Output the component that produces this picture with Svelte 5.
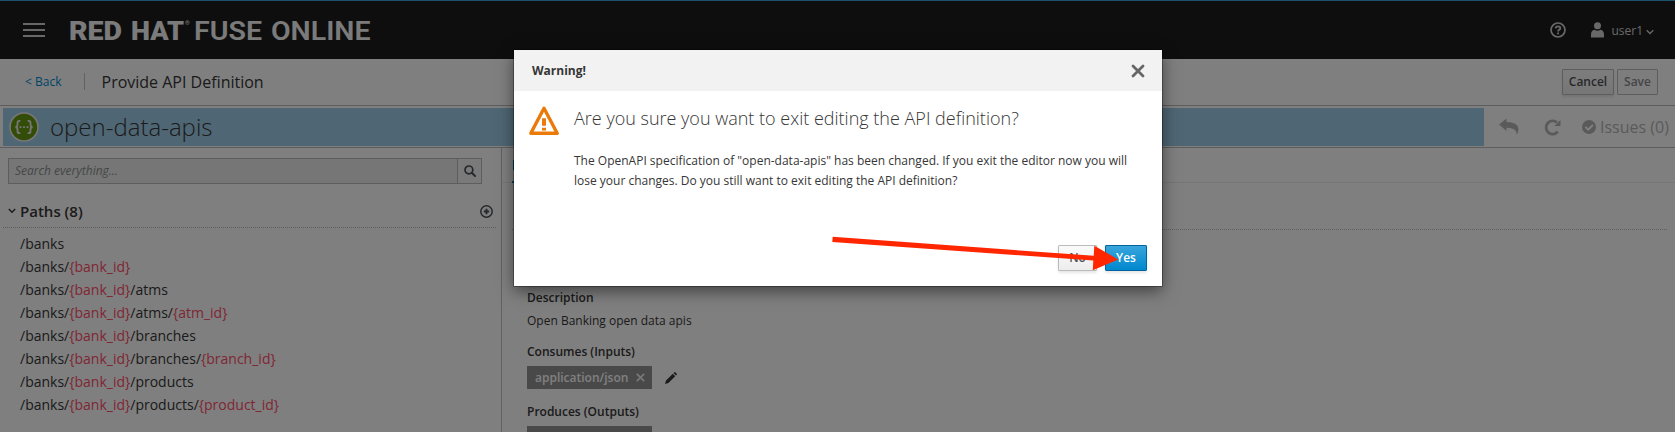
<script>
  const paths = [
    '/banks',
    '/banks/{bank_id}',
    '/banks/{bank_id}/atms',
    '/banks/{bank_id}/atms/{atm_id}',
    '/banks/{bank_id}/branches',
    '/banks/{bank_id}/branches/{branch_id}',
    '/banks/{bank_id}/products',
    '/banks/{bank_id}/products/{product_id}'
  ].map((p) => p.split(/(\{[^}]+\})/).filter(Boolean));
</script>

<div class="app">
  <header class="top">
    <div class="burger"><i></i><i></i><i></i></div>
    <svg class="brand" width="304" height="30" viewBox="0 0 304 30">
      <text class="heavy" x="-1" y="24.5" textLength="53" lengthAdjust="spacingAndGlyphs">RED</text>
      <text class="heavy" x="61" y="24.5" textLength="53" lengthAdjust="spacingAndGlyphs">HAT</text>
      <text class="reg" x="115" y="10">®</text>
      <text class="mid" x="124" y="24.5" textLength="68" lengthAdjust="spacingAndGlyphs">FUSE</text>
      <text class="mid" x="201" y="24.5" textLength="99.5" lengthAdjust="spacingAndGlyphs">ONLINE</text>
    </svg>
    <svg class="help" width="16" height="16" viewBox="0 0 16 16">
      <circle cx="8" cy="8" r="7" fill="none" stroke="#d1d1d1" stroke-width="1.7" />
      <path d="M5.7 6.3Q5.9 4.4 8 4.4Q10.3 4.4 10.3 6.2Q10.3 7.2 9 7.9Q8.1 8.4 8.1 9.4" fill="none" stroke="#d1d1d1" stroke-width="1.8" />
      <path d="M7.1 10.4h1.9v1.8H7.1z" fill="#d1d1d1" />
    </svg>
    <svg class="person" width="13" height="16" viewBox="0 0 13 16" fill="#d1d1d1">
      <circle cx="6.5" cy="3.7" r="3.5" />
      <path d="M0 15.5V12.5Q0 8.5 3.6 7.8Q6.5 9.5 9.4 7.8Q13 8.5 13 12.5V15.5Z" />
    </svg>
    <span class="user">user1</span>
    <svg class="chev" width="8" height="6" viewBox="0 0 8 6"><path d="M.7 1.2L4 4.5L7.3 1.2" fill="none" stroke="#d1d1d1" stroke-width="1.3" /></svg>
  </header>

  <div class="sub">
    <span class="back">&lt; Back</span>
    <span class="crumb">Provide API Definition</span>
    <button class="btn">Cancel</button>
    <button class="btn off">Save</button>
  </div>

  <div class="titlebar">
    <div class="title">
      <svg class="swagger" width="30" height="30" viewBox="0 0 30 30">
        <circle cx="15" cy="15" r="14.8" fill="#eee" />
        <circle cx="15" cy="15" r="13.2" fill="#669a12" />
        <path d="M11.4 8.8H10.3Q8.5 8.8 8.5 10.8V12.7Q8.5 14.8 6.5 15Q8.5 15.2 8.5 17.3V19.2Q8.5 21.2 10.3 21.2H11.4M18.6 8.8H19.7Q21.5 8.8 21.5 10.8V12.7Q21.5 14.8 23.5 15Q21.5 15.2 21.5 17.3V19.2Q21.5 21.2 19.7 21.2H18.6" fill="none" stroke="#eee" stroke-width="1.8" />
        <path d="M10.6 14.2h1.8v1.8h-1.8zM14.1 14.2h1.8v1.8h-1.8zM17.6 14.2h1.8v1.8h-1.8z" fill="#eee" />
      </svg>
      <h1>open-data-apis</h1>
    </div>
    <svg class="undo" width="20" height="18" viewBox="0 0 20 18" fill="#b5b5b5">
      <path d="M0 6.5L7.5.5V4Q19 4 19.5 11Q19.5 14 17.7 17Q18 9.7 7.5 9.8V13Z" />
    </svg>
    <svg class="redo" width="17" height="17" viewBox="0 0 17 17">
      <path d="M13.8 12.7A6.6 6.6 0 1 1 13 3.5" fill="none" stroke="#b5b5b5" stroke-width="2.8" />
      <path d="M16.5 1V7.1H10.2Z" fill="#b5b5b5" />
    </svg>
    <svg class="check" width="14" height="14" viewBox="0 0 14 14">
      <circle cx="7" cy="7" r="7" fill="#b5b5b5" />
      <path d="M3.4 6.9L6.2 9.7L10.9 5" fill="none" stroke="#fff" stroke-width="2" />
    </svg>
    <span class="issues">Issues (0)</span>
  </div>

  <main>
    <aside>
      <div class="search">
        <span>Search everything...</span>
        <b>
          <svg width="12" height="12" viewBox="0 0 12 12" fill="none" stroke="#4d5258">
            <circle cx="4.9" cy="4.9" r="3.9" stroke-width="1.7" /><path d="M7.8 7.8L11 11" stroke-width="2" stroke-linecap="round" />
          </svg>
        </b>
      </div>
      <div class="section">
        <svg width="8" height="6" viewBox="0 0 8 6"><path d="M.8 1L4 4.3L7.2 1" fill="none" stroke="#363636" stroke-width="1.4" /></svg>
        <h2>Paths (8)</h2>
        <svg class="plus" width="13" height="13" viewBox="0 0 13 13" fill="none" stroke="#4d5258">
          <circle cx="6.5" cy="6.5" r="5.7" stroke-width="1.5" /><path d="M6.5 3.8V9.2M3.8 6.5H9.2" stroke-width="1.9" />
        </svg>
      </div>
      <ul>
        {#each paths as parts}
          <li>{#each parts as part}<span class:param={part.startsWith('{')}>{part}</span>{/each}</li>
        {/each}
      </ul>
    </aside>

    <section class="detail">
      <div class="tabs"><span class="tab"></span></div>
      <div class="rule"></div>
      <h3>Description</h3>
      <p>Open Banking open data apis</p>
      <h3 class="consumes">Consumes (Inputs)</h3>
      <div class="types">
        <span class="chip">application/json
          <svg width="9" height="9" viewBox="0 0 9 9"><path d="M.8.8L8.2 8.2M8.2.8L.8 8.2" stroke="#f0f0f0" stroke-width="1.7" /></svg>
        </span>
        <svg class="pencil" width="12" height="12" viewBox="0 0 12 12" fill="#363636">
          <path d="M0 12L1 8.5L7.8 1.8L10.2 4.2L3.4 11ZM8.5 1.1L9.3.3Q10 0 10.6.4L11.6 1.4Q12 2 11.7 2.7L10.9 3.5Z" />
        </svg>
      </div>
      <h3 class="produces">Produces (Outputs)</h3>
      <div class="types"><span class="chip"></span></div>
    </section>
  </main>
</div>

<div class="backdrop">
  <div class="modal" role="dialog">
    <div class="head">
      <h4>Warning!</h4>
      <svg width="14" height="14" viewBox="0 0 14 14"><path d="M2 2L12 12M12 2L2 12" stroke="#666" stroke-width="2.8" stroke-linecap="round" /></svg>
    </div>
    <div class="content">
      <svg width="30" height="30" viewBox="0 0 30 30">
        <path d="M15 2.2L28.2 27.3H1.8Z" fill="none" stroke="#ec7a08" stroke-width="3.4" stroke-linejoin="round" />
        <path d="M13 12.2h4v7.6h-4zM13 21.8h4v2.7h-4z" fill="#ec7a08" />
      </svg>
      <div class="copy">
        <p class="lead">Are you sure you want to exit editing the API definition?</p>
        <p class="text">The OpenAPI specification of "open-data-apis" has been changed. If you exit the editor now you will lose your changes. Do you still want to exit editing the API definition?</p>
      </div>
    </div>
    <div class="foot">
      <button class="btn no">No</button>
      <button class="btn yes">Yes</button>
    </div>
  </div>
</div>

<svg class="arrow" width="290" height="38" viewBox="0 0 290 38">
  <path d="M.7 1.8L.3 7L261.3 25.6L260.8 35.3L286.2 24.4L262.3 10.8L261.7 20.8Z" fill="#ff2600" />
</svg>

<style>
  :global(body) { overflow: hidden; }
  :global(#app) { font-family: 'Open Sans', 'Noto Sans', sans-serif; color: #363636; font-size: 12px; }
  * { box-sizing: border-box; }
  h1, h2, h3, h4, p, ul { margin: 0; padding: 0; }
  svg { display: block; flex: none; }
  .app { height: 432px; overflow: hidden; background: #fff; display: flex; flex-direction: column; }
  .top { flex: none; height: 59px; background: #1d1d1d; border-top: 1px solid #39a5dc; display: flex; align-items: center; padding-right: 21px; }
  .burger { width: 22px; margin-left: 23px; display: grid; gap: 4px; }
  .burger i { height: 2px; background: #d1d1d1; }
  .brand { margin-left: 25px; fill: #fff; opacity: .96; overflow: visible; }
  .heavy { font: 900 26px Roboto, sans-serif; }
  .mid { font: 600 26px Roboto, sans-serif; }
  .reg { font: 6px Roboto, sans-serif; }
  .help { margin-left: auto; }
  .person { margin-left: 25px; }
  .user { color: #d1d1d1; width: 30px; margin-left: 7px; padding-left: .5px; }
  .chev { margin-left: 5px; margin-top: 3px; }
  .sub { flex: none; height: 47px; border-bottom: 1px solid #bbb; display: flex; align-items: center; padding-right: 17px; }
  .back { color: #0088ce; width: 60px; margin: 0 0 1px 25px; border-right: 1px solid #c4c4c4; line-height: 17px; }
  .crumb { font-size: 16px; margin: 0 auto 1px 16.5px; }
  .btn { height: 26px; padding: 0; border: 1px solid #bbb; border-radius: 1px; background: linear-gradient(#fafafa, #ededed); font: 600 12px/22px 'Open Sans', sans-serif; color: #4d5258; box-shadow: 0 2px 3px rgba(3, 3, 3, .1); padding-bottom: 1px; }
  .sub .btn { width: 52px; }
  .sub .off { width: 41px; margin-left: 3px; background: #fafafa; color: #8b8d8f; box-shadow: none; }
  .titlebar { flex: none; height: 42px; border-bottom: 1px solid #bbb; padding: 2px 6px 1px 3px; display: flex; align-items: center; color: #b5b5b5; }
  .title { width: 1481px; flex: none; height: 38px; background: #9fcde8; display: flex; align-items: center; padding-left: 6px; color: #363636; }
  h1 { font-size: 24px; font-weight: 300; margin-left: 11px; line-height: 34px; }
  .undo { margin-left: 15px; }
  .redo { margin-left: 25px; }
  .check { margin-left: 21px; }
  .issues { font-size: 16px; margin-left: 4px; white-space: nowrap; }
  main { flex: 1; display: flex; min-height: 0; }
  aside { width: 502px; border-right: 1px solid #c4c4c4; padding: 10px 5px 0 3px; }
  .search { margin-left: 5px; width: 474px; height: 26px; border: 1px solid #bbb; display: flex; background: #ededed; color: #8b8d8f; font-style: italic; line-height: 24px; }
  .search span { flex: 1; padding-left: 6px; }
  .search b { width: 24px; border-left: 1px solid #bbb; background: #f5f5f5; display: grid; place-items: center; }
  .section { height: 44px; padding: 11px 3px 0 5px; display: flex; align-items: center; border-bottom: 1px dotted #bbb; }
  h2 { font-size: 15px; line-height: 20px; font-weight: 600; margin: 0 0 1px 4px; }
  .plus { margin-left: auto; }
  ul { list-style: none; margin: 5px 0 0 17px; font-size: 14px; line-height: 22.6px; }
  li { height: 23px; white-space: nowrap; }
  .param { color: #ff4d6a; }
  .detail { flex: 1; }
  .tabs { height: 35px; border-bottom: 1px solid #ededed; padding-left: 10px; display: flex; }
  .tab { width: 40px; height: 35px; border-bottom: 2px solid #0088ce; background: linear-gradient(#0088ce, #0088ce) 1px 12px / 2px 10px no-repeat; }
  .rule { height: 47px; margin: 0 8px 0 10px; border-bottom: 1px dotted #bbb; }
  h3 { font-size: 12px; font-weight: 600; line-height: 18px; }
  .detail > h3, .detail > p, .types { margin-left: 25px; }
  .detail > h3 { margin-top: 59px; }
  .detail > p { margin-top: 5px; line-height: 18px; }
  .detail > .consumes { margin-top: 13px; }
  .detail > .produces { margin-top: 14px; }
  .types { display: flex; align-items: center; margin-top: 5px; }
  .chip { width: 125px; height: 23px; background: #939393; color: #fff; display: flex; align-items: center; justify-content: space-between; padding: 0 7px 1px 8px; font-weight: 600; }
  .pencil { margin-left: 13px; }
  .backdrop { position: absolute; inset: 0; background: rgba(0, 0, 0, .5); display: flex; justify-content: center; align-items: flex-start; padding-top: 50px; overflow: hidden; }
  .modal { width: 648px; height: 236px; margin-left: 1px; background: #fff; box-shadow: 0 0 0 1px rgba(0, 0, 0, .3), 0 5px 15px rgba(0, 0, 0, .5); display: flex; flex-direction: column; }
  .head { height: 41px; background: #f2f2f2; display: flex; align-items: center; justify-content: space-between; padding: 0 17px 0 18px; }
  h4 { font-size: 12px; font-weight: 700; margin-bottom: 1px; }
  .content { display: flex; padding: 15px 20px 0 15px; }
  .copy { margin-left: 15px; }
  .lead { font-size: 18px; font-weight: 300; line-height: 25px; }
  .text { margin-top: 20px; line-height: 20px; width: 565px; }
  .foot { margin-top: auto; display: flex; justify-content: flex-end; gap: 8px; padding: 0 15px 15px 0; }
  .no { width: 39px; }
  .yes { width: 42px; color: #fff; border-color: #00659c; background: linear-gradient(#39a5dc, #0088ce); }
  .arrow { position: absolute; left: 832px; top: 235px; }
</style>
